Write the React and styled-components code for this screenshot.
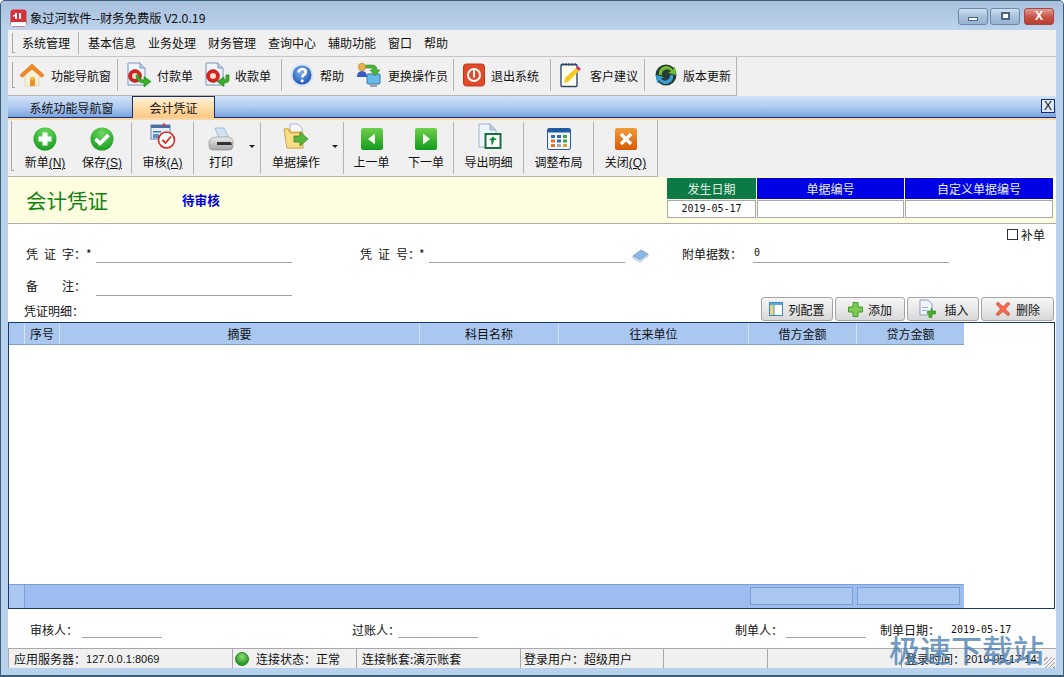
import React from 'react';
import styled, { createGlobalStyle } from 'styled-components';

const Global = createGlobalStyle`
  html, body { margin: 0; padding: 0; background: #fff; }
  * { box-sizing: border-box; }
  body { font-family: "Noto Sans CJK SC", "Liberation Sans", sans-serif; font-size: 12px; color: #111; }
`;

const AppIcon = () => (
  <svg width="17" height="18" viewBox="0 0 17 18">
    <rect x="0.5" y="0.5" width="16" height="17" rx="3" fill="#d8303a" />
    <rect x="1" y="13" width="15" height="4" rx="1" fill="#fff" />
    <rect x="5" y="4" width="2" height="6" fill="#fff" />
    <rect x="9" y="4" width="2" height="6" fill="#fff" />
    <rect x="3" y="6" width="4" height="1.5" fill="#fff" />
  </svg>
);
const HomeIcon = () => (
  <svg width="26" height="26" viewBox="0 0 26 26">
    <path d="M6 12 L13 6 L20 12 V24 H6 Z" fill="#f8f0d8" stroke="#d8c8a0" strokeWidth=".6" />
    <path d="M1 13 L13 2 L25 13 L23 15.5 L13 7 L3 15.5 Z" fill="#f08a24" stroke="#d06a10" strokeWidth=".6" />
    <rect x="11" y="16" width="5" height="8" fill="#e8902c" />
    <circle cx="13.5" cy="16.5" r="2" fill="#f8c040" />
  </svg>
);
const BillIcon = ({ down }) => (
  <svg width="26" height="26" viewBox="0 0 26 26">
    <path d="M2 1 H14 L19 6 V23 H2 Z" fill="#eef4fb" stroke="#7a94b8" />
    <path d="M14 1 V6 H19" fill="#c4d4e8" stroke="#7a94b8" />
    <circle cx="9" cy="14" r="6.5" fill="#d82020" stroke="#a01010" strokeWidth=".5" />
    <circle cx="9" cy="14" r="3" fill="#f8e0d0" />
    {down ? (
      <path d="M22 13 L25 13 V18 Q25 21 20 21 V24.5 L13 19.5 L20 15 V18 Q22 18 22 16 Z" fill="#3cae2c" stroke="#1c7a14" strokeWidth=".6" />
    ) : (
      <path d="M10 13 L13 13 Q13 18 18 18 V14.5 L25 19.5 L18 25 V21 Q10 21 10 13 Z" fill="#3cae2c" stroke="#1c7a14" strokeWidth=".6" />
    )}
  </svg>
);
const HelpIcon = () => (
  <svg width="24" height="24" viewBox="0 0 24 24">
    <defs>
      <radialGradient id="helpG" cx="45%" cy="35%" r="70%">
        <stop offset="0" stopColor="#7fb0ee" />
        <stop offset="1" stopColor="#1a4fb0" />
      </radialGradient>
    </defs>
    <circle cx="12" cy="12" r="11.5" fill="#d8e6f8" />
    <circle cx="12" cy="12" r="9.5" fill="url(#helpG)" />
    <path d="M8.5 9.5 Q9 6 12.5 6 Q16 6.3 15.8 9 Q15.5 11 13.5 12 Q12.3 12.8 12.3 14.5" fill="none" stroke="#fff" strokeWidth="2.6" />
    <circle cx="12.2" cy="17.8" r="1.6" fill="#fff" />
  </svg>
);
const OperatorIcon = () => (
  <svg width="26" height="26" viewBox="0 0 26 26">
    <circle cx="6" cy="5" r="3.8" fill="#e8b048" stroke="#a87820" strokeWidth=".5" />
    <path d="M1 15 Q1 9 6 9 Q11 9 11 15 Z" fill="#3a58c0" />
    <rect x="11" y="12" width="13" height="10" rx="1" fill="#6ab8e8" stroke="#3878a8" />
    <rect x="14" y="22" width="7" height="3" fill="#98a4b0" />
    <path d="M10 3 H16 Q21 3 21 8 H24 L19 14 L14 8 H17 Q17 6 15 6 H10 Z" fill="#48b838" stroke="#287818" strokeWidth=".5" />
  </svg>
);
const ExitIcon = () => (
  <svg width="22" height="24" viewBox="0 0 22 24">
    <rect x="0.5" y="1" width="21" height="22" rx="3" fill="#e04a28" stroke="#c03818" />
    <circle cx="11" cy="12" r="6" fill="none" stroke="#fff" strokeWidth="2" />
    <rect x="10" y="6.5" width="2" height="8" fill="#fff" />
  </svg>
);
const NoteIcon = () => (
  <svg width="22" height="26" viewBox="0 0 22 26">
    <rect x="1" y="2.5" width="16" height="22" rx="1" fill="#fffef0" stroke="#2c4a68" strokeWidth="1.4" />
    <path d="M3 1 V4 M6 1 V4 M9 1 V4 M12 1 V4 M15 1 V4" stroke="#2c4a68" />
    <path d="M4 21 L5 16 L16 6 L19 9 L8 20 Z" fill="#f4c820" />
    <path d="M16 6 L18 4 L21 7 L19 9 Z" fill="#d83870" />
  </svg>
);
const UpdateIcon = () => (
  <svg width="22" height="24" viewBox="0 0 22 24">
    <circle cx="11" cy="12" r="10.5" fill="#2a3a34" />
    <path d="M4 12 A7.5 7.5 0 0 1 18 7 L20 3 L21 12 L13 10 L16 8.5 A5 5 0 0 0 7 12 Z" fill="#6cc030" />
    <path d="M18 12 A7.5 7.5 0 0 1 4 17 L2 21 L1 12 L9 14 L6 15.5 A5 5 0 0 0 15 12 Z" fill="#38a0d8" />
  </svg>
);

const Ball = ({ id, children }) => (
  <svg width="24" height="24" viewBox="0 0 24 24">
    <defs>
      <radialGradient id={id} cx="50%" cy="25%" r="80%">
        <stop offset="0" stopColor="#6fd860" />
        <stop offset="1" stopColor="#119a1c" />
      </radialGradient>
    </defs>
    <circle cx="12" cy="12" r="11.5" fill={`url(#${id})`} />
    {children}
  </svg>
);
const NewIcon = () => (
  <Ball id="newG">
    <path d="M9.5 5.5 H14.5 V9.5 H18.5 V14.5 H14.5 V18.5 H9.5 V14.5 H5.5 V9.5 H9.5 Z" fill="#fff" />
  </Ball>
);
const SaveIcon = () => (
  <Ball id="saveG">
    <path d="M5.5 12 L10 16.5 L18.5 8" fill="none" stroke="#fff" strokeWidth="3.6" />
  </Ball>
);
const AuditIcon = () => (
  <svg width="26" height="28" viewBox="0 0 26 28">
    <rect x="1" y="2" width="19" height="14" fill="#e4eef8" stroke="#6a84a8" />
    <rect x="1" y="2" width="19" height="3" fill="#4a6ea8" />
    <rect x="3" y="8" width="8" height="1.5" fill="#3a78c8" />
    <rect x="3" y="11" width="6" height="4" fill="#5a90d8" />
    <circle cx="14" cy="1.8" r="1.6" fill="#c84040" />
    <circle cx="16.5" cy="17" r="8" fill="#fff" stroke="#d82a20" strokeWidth="1.6" />
    <path d="M12.5 17 L15.5 20 L21 13.5" fill="none" stroke="#d82a20" strokeWidth="1.8" />
  </svg>
);
const PrinterIcon = () => (
  <svg width="26" height="24" viewBox="0 0 26 24">
    <defs>
      <linearGradient id="printG" x1="0" y1="0" x2="0" y2="1">
        <stop offset="0" stopColor="#ececec" />
        <stop offset="1" stopColor="#a4a4a4" />
      </linearGradient>
    </defs>
    <path d="M7 1 H16 L21 11 H11 Z" fill="#cfe2f6" stroke="#8aa6c4" strokeWidth=".7" />
    <path d="M1 14 Q3 10 8 10 H20 Q25 11 25 15 V19 Q25 23 21 23 H5 Q1 23 1 19 Z" fill="url(#printG)" stroke="#8a8a8a" strokeWidth=".6" />
    <path d="M9 15 H23 L24 18 H9 Z" fill="#333" />
  </svg>
);
const FolderIcon = () => (
  <svg width="26" height="28" viewBox="0 0 26 28">
    <path d="M7 1 H15 L19 5 V14 H7 Z" fill="#f4f7fb" stroke="#8ca0bc" strokeWidth=".7" />
    <path d="M1 6 H6 L8 9 H20 V25 H4 Z" fill="#f2c860" stroke="#c89830" strokeWidth=".7" />
    <path d="M1 6 L4 25 L20 25 L17 10 L7 10 L5 6 Z" fill="#f8dc88" stroke="#c89830" strokeWidth=".6" />
    <path d="M11 13 H17 V9 L25 16 L17 23 V19 H11 Z" fill="#5cb83c" stroke="#2c8018" strokeWidth=".7" />
  </svg>
);
const ArrowBox = ({ right }) => (
  <svg width="22" height="22" viewBox="0 0 22 22">
    <defs>
      <linearGradient id={right ? 'nextG' : 'prevG'} x1="0" y1="0" x2="0" y2="1">
        <stop offset="0" stopColor="#6fd04c" />
        <stop offset="1" stopColor="#119a1c" />
      </linearGradient>
    </defs>
    <rect x="0" y="0" width="22" height="22" rx="2" fill={`url(#${right ? 'nextG' : 'prevG'})`} />
    <path d={right ? 'M8 5.5 L15 11 L8 16.5 Z' : 'M14 5.5 L7 11 L14 16.5 Z'} fill="#f4fff0" />
  </svg>
);
const ExportIcon = () => (
  <svg width="26" height="28" viewBox="0 0 26 28">
    <path d="M3 1 H14 L20 7 V24 H3 Z" fill="#eef4fc" stroke="#a0b4cc" />
    <path d="M14 1 V7 H20" fill="#b4c8e0" stroke="#a0b4cc" />
    <rect x="9.5" y="11" width="15" height="14" fill="#fff" stroke="#18703c" strokeWidth="2" />
    <path d="M17 13.5 L21 17 L18 17 Q18 20 15.5 22.5 Q15.5 19 15 17 L13 17 Z" fill="#18883c" />
  </svg>
);
const LayoutIcon = () => (
  <svg width="24" height="22" viewBox="0 0 24 22">
    <rect x="0.5" y="0.5" width="23" height="21" rx="1.5" fill="#f4f8fc" stroke="#2a5a98" />
    <rect x="1" y="1" width="22" height="3.5" fill="#1c5aa8" />
    {[
      ['#3a68b8', '#3a68b8', '#38a848'],
      ['#e07828', '#3a68b8', '#38a848'],
      ['#e07828', '#a8a8a8', '#e0a028'],
    ].map((row, r) =>
      row.map((c, i) => <rect key={`${r}-${i}`} x={4 + i * 6} y={7 + r * 4.5} width="4" height="3" fill={c} />),
    )}
  </svg>
);
const CloseIcon = () => (
  <svg width="22" height="22" viewBox="0 0 22 22">
    <defs>
      <linearGradient id="closeG" x1="0" y1="0" x2="0" y2="1">
        <stop offset="0" stopColor="#f49a38" />
        <stop offset="1" stopColor="#d85a08" />
      </linearGradient>
    </defs>
    <rect width="22" height="22" rx="2" fill="url(#closeG)" />
    <path d="M6 6 L16 16 M16 6 L6 16" stroke="#fff" strokeWidth="3.4" />
  </svg>
);
const BookIcon = () => (
  <svg width="17" height="14" viewBox="0 0 17 14">
    <path d="M1 7 L9 1 L16 5 L8 11 Z" fill="#88b8e8" stroke="#5a88b8" strokeWidth=".6" />
    <path d="M1 7 V9 L8 13 L16 7 V5 L8 11 Z" fill="#e8f0f8" stroke="#7a9cc0" strokeWidth=".6" />
  </svg>
);
const ColumnsIcon = () => (
  <svg width="14" height="14" viewBox="0 0 14 14">
    <rect x="0.5" y="0.5" width="13" height="13" fill="#fff" stroke="#3a88c8" />
    <rect x="1" y="1" width="12" height="2" fill="#58a8e0" />
    <rect x="1" y="3" width="3.5" height="10" fill="#f0d078" />
    <path d="M5 3 V13" stroke="#3a88c8" />
  </svg>
);
const PlusIcon = () => (
  <svg width="15" height="15" viewBox="0 0 15 15">
    <path d="M5 .5 H10 V5 H14.5 V10 H10 V14.5 H5 V10 H.5 V5 H5 Z" fill="#7ccc54" stroke="#3e9a28" />
  </svg>
);
const InsertIcon = () => (
  <svg width="20" height="20" viewBox="0 0 20 20">
    <path d="M3 1 H11 L15 5 V16 H3 Z" fill="#f0f4fa" stroke="#8aa0bc" />
    <rect x="5" y="8" width="6" height="1" fill="#9ab0c8" />
    <rect x="5" y="11" width="5" height="1" fill="#9ab0c8" />
    <path d="M10.5 12 H14 V9.5 H15 V12 H18.5 V15 H15 V18.5 H12 V15 H10.5 Z" fill="#48b030" stroke="#2a8018" strokeWidth=".6" />
  </svg>
);
const CrossIcon = () => (
  <svg width="16" height="16" viewBox="0 0 16 16">
    <path d="M1 3 L3 1 L8 5.5 L13 1 L15 3 L10.5 8 L15 13 L13 15 L8 10.5 L3 15 L1 13 L5.5 8 Z" fill="#f06a50" stroke="#d04830" strokeWidth=".6" />
  </svg>
);

const Window = styled.div`
  position: relative;
  width: 1064px;
  height: 677px;
  overflow: hidden;
  display: flex;
  flex-direction: column;
  padding-bottom: 7px;
  background: #b8d2ee;
  border: 1px solid #3e5f78;
  border-bottom-width: 2px;
  border-radius: 5px 5px 0 0;
`;
const TitleBar = styled.div`
  height: 29px;
  flex-shrink: 0;
  display: flex;
  align-items: center;
  padding: 4px 9px 0 9px;
  gap: 3px;
  background: linear-gradient(#a9c2de, #b4cbe6 60%, #bed3ec);
  font-size: 12.3px;
  color: #111;
`;
const TitleText = styled.span`
  flex: 1;
`;
const WinButtons = styled.div`
  display: flex;
  gap: 2px;
  margin-bottom: 3px;
`;
const WinButton = styled.div`
  width: 30px;
  height: 17px;
  margin-left: ${(p) => (p.$close ? 2 : 0)}px;
  border: 1px solid ${(p) => (p.$close ? '#a04a40' : '#6c88a8')};
  border-radius: 3px;
  display: flex;
  align-items: center;
  justify-content: center;
  color: #fff;
  font-family: "Liberation Sans", sans-serif;
  font-weight: bold;
  font-size: 12px;
  background: ${(p) =>
    p.$close
      ? 'linear-gradient(#e0a098, #c9564a 50%, #bc3c30)'
      : 'linear-gradient(#cfe0f0, #a8c2dc 50%, #98b4d2)'};
`;
const MinGlyph = styled.span`
  width: 10px;
  height: 4px;
  margin-top: 5px;
  background: #fff;
  border: 1px solid #4a6484;
`;
const MaxGlyph = styled.span`
  width: 9px;
  height: 8px;
  background: #fff;
  border: 2px solid #4a6484;
`;
const Body = styled.div`
  flex: 1;
  min-height: 0;
  margin: 0 7px;
  display: flex;
  flex-direction: column;
  background: #fff;
`;
const MenuBar = styled.div`
  height: 27px;
  flex-shrink: 0;
  display: flex;
  align-items: center;
  padding-left: 4px;
  background: #f0f0f0;
  border-bottom: 1px solid #c4c4c4;
`;
const Grip = styled.div`
  width: 3px;
  height: ${(p) => p.$h || 20}px;
  border-left: 1px solid #a8a8a8;
  border-bottom: 1px solid #a8a8a8;
  margin-right: 3px;
  flex-shrink: 0;
`;
const MenuItem = styled.div`
  padding: 0 6px;
  height: 22px;
  line-height: 22px;
  ${(p) => p.$first && 'border-right: 1px solid #b4b4b4; margin-right: 3px; padding: 0 8px 0 4px;'}
`;
const ToolRow = styled.div`
  height: 39px;
  flex-shrink: 0;
  background: #f0f0f0;
  display: flex;
  align-items: stretch;
`;
const ToolStrip = styled.div`
  display: flex;
  align-items: center;
  padding: 0 0 2px 4px;
  border-right: 1px solid #b4b4b4;
  border-bottom: 1px solid #b4b4b4;
`;
const ToolSep = styled.div`
  width: 1px;
  height: 32px;
  background: #b4b4b4;
  flex-shrink: 0;
`;
const ToolBtn = styled.div`
  width: ${(p) => p.$w}px;
  padding-left: ${(p) => p.$pl || 0}px;
  display: flex;
  align-items: center;
  gap: ${(p) => p.$gap || 6}px;
  white-space: nowrap;
  flex-shrink: 0;
`;
const TabBand = styled.div`
  height: 22px;
  flex-shrink: 0;
  display: flex;
  align-items: flex-end;
  justify-content: space-between;
  padding: 0 1px 0 0;
  background: linear-gradient(#d2e2f8, #b0ccf0 50%, #7ca2de);
  border-bottom: 1px solid #14306e;
`;
const Tabs = styled.div`
  display: flex;
  align-items: flex-end;
  margin-bottom: -1px;
`;
const Tab = styled.div`
  height: ${(p) => (p.$active ? 22 : 21)}px;
  width: ${(p) => p.$w}px;
  padding-left: ${(p) => (p.$active ? 0 : 3)}px;
  display: flex;
  align-items: center;
  justify-content: center;
  ${(p) =>
    p.$active &&
    `
    background: linear-gradient(#fff2d8, #ffd8a0 60%, #fcc888);
    border: 1px solid #14306e;
    border-bottom: none;
  `}
`;
const TabClose = styled.div`
  width: 14px;
  height: 14px;
  margin-bottom: 4px;
  border: 1px solid #14306e;
  background: #dce8f8;
  display: flex;
  align-items: center;
  justify-content: center;
  font-family: "Liberation Sans", sans-serif;
  font-size: 12px;
  line-height: 1;
`;
const OrangeStrip = styled.div`
  height: 2px;
  flex-shrink: 0;
  background: #f8d8a8;
`;
const ActionRow = styled.div`
  height: 57px;
  flex-shrink: 0;
  background: #f0f0f0;
  display: flex;
  align-items: stretch;
`;
const ActionStrip = styled.div`
  display: flex;
  align-items: stretch;
  padding: 1px 0 1px 3px;
  border-bottom: 1px solid #b4b4b4;
  width: 650px;
  border-right: 1px solid #b4b4b4;
`;
const ActionSep = styled.div`
  width: 1px;
  background: #b4b4b4;
  margin: 1px 0;
  flex-shrink: 0;
`;
const ActionBtn = styled.div`
  position: relative;
  width: ${(p) => p.$w}px;
  padding-right: ${(p) => p.$pr || 0}px;
  flex-shrink: 0;
  display: flex;
  flex-direction: column;
  align-items: center;
`;
const ActionIcon = styled.div`
  height: 32px;
  display: flex;
  align-items: center;
  justify-content: center;
  padding-top: ${(p) => p.$pt ?? 3}px;
`;
const ActionLabel = styled.div`
  line-height: 17px;
  white-space: nowrap;
`;
const Key = styled.span`
  text-decoration: underline;
  font-family: "Liberation Sans", sans-serif;
`;
const DropArrow = styled.span`
  position: absolute;
  right: 5px;
  top: 24px;
  width: 0;
  height: 0;
  border: 3px solid transparent;
  border-top: 3px solid #222;
  border-bottom: none;
`;
const Header = styled.div`
  height: 47px;
  flex-shrink: 0;
  display: flex;
  align-items: flex-start;
  justify-content: space-between;
  background: #fdfde0;
  border-bottom: 1px solid #b0b0b0;
  padding: 1px 3px 0 18px;
`;
const HeaderTitle = styled.div`
  display: flex;
  align-items: center;
  height: 43px;
`;
const VoucherName = styled.div`
  width: 156px;
  font-size: 20.5px;
  color: #12820f;
`;
const VoucherState = styled.div`
  font-weight: bold;
  font-size: 12.6px;
  color: #0000d8;
`;
const InfoGrid = styled.div`
  display: grid;
  grid-template-columns: 89px 147px 148px;
  column-gap: 1px;
  row-gap: 1px;
`;
const InfoHead = styled.div`
  height: 21px;
  line-height: 21px;
  text-align: center;
  color: #e8f0e8;
  background: ${(p) => p.$bg};
`;
const InfoCell = styled.div`
  height: 18px;
  line-height: 16px;
  text-align: center;
  background: #fff;
  border: 1px solid #a8a8a8;
  font-family: "DejaVu Sans Mono", monospace;
  font-size: 10px;
`;
const Form = styled.div`
  height: 98px;
  flex-shrink: 0;
  display: flex;
  flex-direction: column;
  padding: 2px 2px 1px 0;
`;
const CheckRow = styled.div`
  display: flex;
  justify-content: flex-end;
  align-items: center;
  height: 17px;
  gap: 3px;
  padding-right: 9px;
`;
const CheckBox = styled.span`
  width: 11px;
  height: 11px;
  border: 1px solid #333;
  background: #fff;
`;
const FieldRow = styled.div`
  display: flex;
  align-items: flex-end;
  padding-left: 18px;
  height: ${(p) => p.$h}px;
`;
const Field = styled.div`
  display: flex;
  align-items: flex-end;
  width: ${(p) => p.$w}px;
  flex-shrink: 0;
`;
const Label = styled.div`
  width: ${(p) => p.$w || 60}px;
  white-space: pre;
  word-spacing: 3.3px;
  line-height: 17px;
  padding-bottom: ${(p) => p.$pb ?? 1}px;
  flex-shrink: 0;
`;
const Star = styled.div`
  width: 10px;
  line-height: 17px;
  padding-bottom: 1px;
  flex-shrink: 0;
`;
const Line = styled.div`
  width: ${(p) => p.$w}px;
  height: 19px;
  line-height: 18px;
  padding-left: 1px;
  border-bottom: 1px solid #a0a0a0;
  font-family: "DejaVu Sans Mono", monospace;
  font-size: 10px;
  flex-shrink: 0;
`;
const BookSlot = styled.div`
  margin-left: 7px;
  height: 14px;
`;
const DetailRow = styled.div`
  margin-top: auto;
  display: flex;
  align-items: flex-end;
  justify-content: space-between;
  padding: 0 0 0 16px;
`;
const DetailLabel = styled.div`
  line-height: 18px;
  padding-bottom: 1px;
`;
const DetailButtons = styled.div`
  display: flex;
  gap: 2px;
`;
const FlatButton = styled.div`
  width: ${(p) => p.$w}px;
  height: 24px;
  border: 1px solid #a4a4a4;
  border-radius: 3px;
  background: linear-gradient(#f6f6f6, #e8e8e8 50%, #d8d8d8);
  display: flex;
  align-items: center;
  justify-content: center;
  gap: ${(p) => p.$gap || 5}px;
`;
const Table = styled.div`
  flex: 1;
  min-height: 0;
  margin-right: 1px;
  display: flex;
  flex-direction: column;
  border: 1px solid #173a74;
  background: #fff;
`;
const ColumnsGrid = styled.div`
  display: grid;
  width: 955px;
  grid-template-columns: 15px 35px 360px 139px 190px 108px 108px;
  height: 22px;
  flex-shrink: 0;
  background: #a9c7ef;
  border-bottom: 1px solid #7b9fd4;
`;
const ColHead = styled.div`
  display: flex;
  align-items: center;
  justify-content: center;
  border-left: ${(p) => (p.$plain ? 'none' : '1px solid #d4e4f8')};
`;
const TableBody = styled.div`
  flex: 1;
`;
const TotalRow = styled.div`
  width: 955px;
  height: 24px;
  flex-shrink: 0;
  display: flex;
  background: #9dbdf0;
  border-top: 1px solid #7b9fd4;
`;
const TotalIndicator = styled.div`
  width: 16px;
  border-right: 1px solid #7b9fd4;
  background: #a9c7ef;
  margin-right: 725px;
`;
const TotalCell = styled.div`
  width: 104px;
  height: 18px;
  margin: 2px 4px 0 0;
  background: #a9c7ef;
  border: 1px solid #7b9fd4;
`;
const SignRow = styled.div`
  height: 39px;
  flex-shrink: 0;
  display: flex;
  align-items: flex-end;
  padding: 0 0 10px 22px;
`;
const SignField = styled.div`
  display: flex;
  align-items: flex-end;
  width: ${(p) => p.$w}px;
  flex-shrink: 0;
`;
const SignLabel = styled.div`
  width: ${(p) => p.$w}px;
  line-height: 16px;
  white-space: nowrap;
  flex-shrink: 0;
`;
const SignValue = styled.div`
  font-family: "DejaVu Sans Mono", monospace;
  font-size: 10px;
  line-height: 16px;
  margin-left: 11px;
`;
const SignLine = styled.div`
  width: 80px;
  height: 1px;
  background: #a0a0a0;
  flex-shrink: 0;
`;
const StatusBar = styled.div`
  height: 20px;
  flex-shrink: 0;
  display: flex;
  background: #f0f0f0;
  border-top: 1px solid #a8a8a8;
`;
const StatusCell = styled.div`
  width: ${(p) => p.$w}px;
  flex-shrink: 0;
  display: flex;
  align-items: center;
  white-space: nowrap;
  overflow: hidden;
  padding-left: ${(p) => p.$pl || 5}px;
  border-left: 1px solid #a8a8a8;
  margin-left: ${(p) => p.$ml || 0}px;
`;
const StatusDot = styled.span`
  width: 14px;
  height: 14px;
  margin-right: 7px;
  border-radius: 50%;
  background: radial-gradient(circle at 50% 30%, #8fe070, #2a9a28 70%);
  border: 1px solid #2a8028;
`;
const Mono = styled.span`
  font-family: "Liberation Sans", sans-serif;
  font-size: 11px;
`;
const Resize = styled.div`
  position: absolute;
  right: 8px;
  bottom: 7px;
  width: 11px;
  height: 11px;
  background: repeating-linear-gradient(135deg, transparent 0 2px, #a0a0a0 2px 3px);
`;
const Watermark = styled.div`
  position: absolute;
  left: 888px;
  top: 628px;
  font-size: 31px;
  line-height: 40px;
  font-weight: 500;
  color: rgba(74, 128, 178, 0.78);
  white-space: nowrap;
`;

const actions = [
  { w: 56, label: '新单', key: '(N)', icon: <NewIcon /> },
  { w: 58, label: '保存', key: '(S)', icon: <SaveIcon />, sep: true },
  { w: 61, label: '审核', key: '(A)', icon: <AuditIcon />, pt: 0, sep: true },
  { w: 66, label: '打印', icon: <PrinterIcon />, arrow: true, sep: true, pr: 12 },
  { w: 82, label: '单据操作', icon: <FolderIcon />, pt: 0, arrow: true, sep: true, pr: 12 },
  { w: 55, label: '上一单', icon: <ArrowBox /> },
  { w: 54, label: '下一单', icon: <ArrowBox right />, sep: true },
  { w: 69, label: '导出明细', icon: <ExportIcon />, pt: 0, sep: true },
  { w: 69, label: '调整布局', icon: <LayoutIcon />, sep: true },
  { w: 63, label: '关闭', key: '(Q)', icon: <CloseIcon /> },
];

export default function App() {
  return (
    <>
      <Global />
      <Window>
        <TitleBar>
          <AppIcon />
          <TitleText>象过河软件--财务免费版 V2.0.19</TitleText>
          <WinButtons>
            <WinButton><MinGlyph /></WinButton>
            <WinButton><MaxGlyph /></WinButton>
            <WinButton $close>X</WinButton>
          </WinButtons>
        </TitleBar>
        <Body>
          <MenuBar>
            <Grip />
            <MenuItem $first>系统管理</MenuItem>
            {['基本信息', '业务处理', '财务管理', '查询中心', '辅助功能', '窗口', '帮助'].map((m) => (
              <MenuItem key={m}>{m}</MenuItem>
            ))}
          </MenuBar>
          <ToolRow>
            <ToolStrip>
              <Grip $h={26} />
              <ToolBtn $w={99} $pl={1}><HomeIcon />功能导航窗</ToolBtn>
              <ToolSep />
              <ToolBtn $w={79} $pl={8} $gap={5}><BillIcon />付款单</ToolBtn>
              <ToolBtn $w={84} $pl={7} $gap={5}><BillIcon down />收款单</ToolBtn>
              <ToolSep />
              <ToolBtn $w={66} $pl={8}><HelpIcon />帮助</ToolBtn>
              <ToolBtn $w={105} $pl={8}><OperatorIcon />更换操作员</ToolBtn>
              <ToolSep />
              <ToolBtn $w={96} $pl={9}><ExitIcon />退出系统</ToolBtn>
              <ToolSep />
              <ToolBtn $w={93} $pl={9} $gap={8}><NoteIcon />客户建议</ToolBtn>
              <ToolSep />
              <ToolBtn $w={91} $pl={10}><UpdateIcon />版本更新</ToolBtn>
            </ToolStrip>
          </ToolRow>
          <TabBand>
            <Tabs>
              <Tab $w={124}>系统功能导航窗</Tab>
              <Tab $w={83} $active>会计凭证</Tab>
            </Tabs>
            <TabClose>X</TabClose>
          </TabBand>
          <OrangeStrip />
          <ActionRow>
            <ActionStrip>
              <Grip $h={50} />
              {actions.map((a) => (
                <React.Fragment key={a.label}>
                  <ActionBtn $w={a.w} $pr={a.pr}>
                    <ActionIcon $pt={a.pt}>{a.icon}</ActionIcon>
                    <ActionLabel>{a.label}{a.key && <Key>{a.key}</Key>}</ActionLabel>
                    {a.arrow && <DropArrow />}
                  </ActionBtn>
                  {a.sep && <ActionSep />}
                </React.Fragment>
              ))}
            </ActionStrip>
          </ActionRow>
          <Header>
            <HeaderTitle>
              <VoucherName>会计凭证</VoucherName>
              <VoucherState>待审核</VoucherState>
            </HeaderTitle>
            <InfoGrid>
              <InfoHead $bg="#0b7a45">发生日期</InfoHead>
              <InfoHead $bg="#0000e4">单据编号</InfoHead>
              <InfoHead $bg="#0000e4">自定义单据编号</InfoHead>
              <InfoCell>2019-05-17</InfoCell>
              <InfoCell />
              <InfoCell />
            </InfoGrid>
          </Header>
          <Form>
            <CheckRow><CheckBox />补单</CheckRow>
            <FieldRow $h={20}>
              <Field $w={334}>
                <Label>凭 证 字：</Label>
                <Star>*</Star>
                <Line $w={196} />
              </Field>
              <Field $w={322}>
                <Label $w={59}>凭 证 号：</Label>
                <Star>*</Star>
                <Line $w={196} />
                <BookSlot><BookIcon /></BookSlot>
              </Field>
              <Field $w={300}>
                <Label $w={71}>附单据数：</Label>
                <Line $w={196}>0</Line>
              </Field>
            </FieldRow>
            <FieldRow $h={33}>
              <Field $w={334}>
                <Label $w={70} $pb={2}>备    注：</Label>
                <Line $w={196} />
              </Field>
            </FieldRow>
            <DetailRow>
              <DetailLabel>凭证明细：</DetailLabel>
              <DetailButtons>
                <FlatButton $w={72}><ColumnsIcon />列配置</FlatButton>
                <FlatButton $w={70}><PlusIcon />添加</FlatButton>
                <FlatButton $w={72} $gap={7}><InsertIcon />插入</FlatButton>
                <FlatButton $w={73}><CrossIcon />删除</FlatButton>
              </DetailButtons>
            </DetailRow>
          </Form>
          <Table>
            <ColumnsGrid>
              <ColHead $plain />
              <ColHead>序号</ColHead>
              <ColHead>摘要</ColHead>
              <ColHead>科目名称</ColHead>
              <ColHead>往来单位</ColHead>
              <ColHead>借方金额</ColHead>
              <ColHead>贷方金额</ColHead>
            </ColumnsGrid>
            <TableBody />
            <TotalRow>
              <TotalIndicator />
              <TotalCell />
              <TotalCell />
            </TotalRow>
          </Table>
          <SignRow>
            <SignField $w={322}>
              <SignLabel $w={52}>审核人：</SignLabel>
              <SignLine />
            </SignField>
            <SignField $w={383}>
              <SignLabel $w={46}>过账人：</SignLabel>
              <SignLine />
            </SignField>
            <SignField $w={145}>
              <SignLabel $w={51}>制单人：</SignLabel>
              <SignLine />
            </SignField>
            <SignField $w={140}>
              <SignLabel $w={60}>制单日期：</SignLabel>
              <SignValue>2019-05-17</SignValue>
            </SignField>
          </SignRow>
          <StatusBar>
            <StatusCell $w={222}>应用服务器：<Mono>127.0.0.1:8069</Mono></StatusCell>
            <StatusCell $w={122} $ml={2} $pl={2}><StatusDot />连接状态：正常</StatusCell>
            <StatusCell $w={164} $ml={2}>连接帐套:演示账套</StatusCell>
            <StatusCell $w={143} $pl={3}>登录用户：超级用户</StatusCell>
            <StatusCell $w={104} />
            <StatusCell $w={134} />
            <StatusCell $w={145} $pl={3}>登录时间：<Mono>2019-05-17 14:</Mono></StatusCell>
          </StatusBar>
        </Body>
        <Resize />
        <Watermark>极速下载站</Watermark>
      </Window>
    </>
  );
}
